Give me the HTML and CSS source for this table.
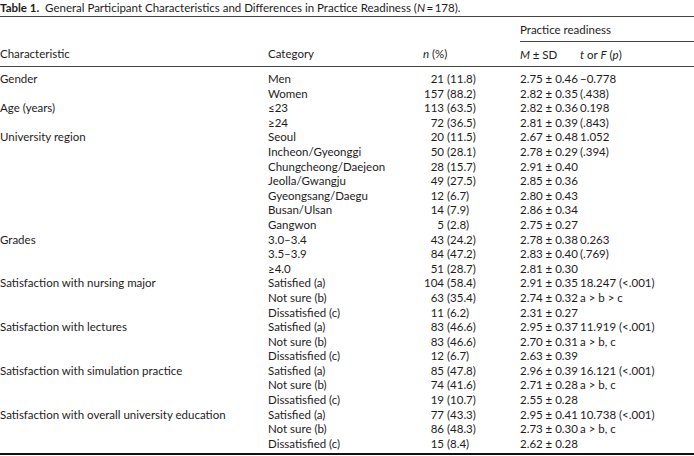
FILE: index.html
```html
<!DOCTYPE html>
<html>
<head>
<meta charset="utf-8">
<link rel="stylesheet" href="styles.css">
</head>
<body>
<div class="caption"><b>Table 1.</b>&nbsp; General Participant Characteristics and Differences in Practice Readiness (<i>N</i>&#8201;=&#8201;178).</div>
<table class="tbl">
  <colgroup>
    <col class="c1"><col class="c2"><col class="c3"><col class="c4"><col class="c5">
  </colgroup>
  <thead>
    <tr class="h1"><th></th><th></th><th></th><th colspan="2" class="span">Practice readiness</th></tr>
    <tr class="h2"><th>Characteristic</th><th>Category</th><th class="nh"><i>n</i> (%)</th><th><i>M</i>&#8197;±&#8197;SD</th><th><i>t</i> or <i>F</i> (<i>p</i>)</th></tr>
  </thead>
  <tbody>
    <tr><td>Gender</td><td>Men</td><td><span class="n">21</span><span class="p">(11.8)</span></td><td>2.75&#8197;±&#8197;0.46</td><td>−0.778</td></tr>
    <tr><td></td><td>Women</td><td><span class="n">157</span><span class="p">(88.2)</span></td><td>2.82&#8197;±&#8197;0.35</td><td>(.438)</td></tr>
    <tr><td>Age (years)</td><td>≤23</td><td><span class="n">113</span><span class="p">(63.5)</span></td><td>2.82&#8197;±&#8197;0.36</td><td>0.198</td></tr>
    <tr><td></td><td>≥24</td><td><span class="n">72</span><span class="p">(36.5)</span></td><td>2.81&#8197;±&#8197;0.39</td><td>(.843)</td></tr>
    <tr><td>University region</td><td>Seoul</td><td><span class="n">20</span><span class="p">(11.5)</span></td><td>2.67&#8197;±&#8197;0.48</td><td>1.052</td></tr>
    <tr><td></td><td>Incheon/Gyeonggi</td><td><span class="n">50</span><span class="p">(28.1)</span></td><td>2.78&#8197;±&#8197;0.29</td><td>(.394)</td></tr>
    <tr><td></td><td>Chungcheong/Daejeon</td><td><span class="n">28</span><span class="p">(15.7)</span></td><td>2.91&#8197;±&#8197;0.40</td><td></td></tr>
    <tr><td></td><td>Jeolla/Gwangju</td><td><span class="n">49</span><span class="p">(27.5)</span></td><td>2.85&#8197;±&#8197;0.36</td><td></td></tr>
    <tr><td></td><td>Gyeongsang/Daegu</td><td><span class="n">12</span><span class="p">(6.7)</span></td><td>2.80&#8197;±&#8197;0.43</td><td></td></tr>
    <tr><td></td><td>Busan/Ulsan</td><td><span class="n">14</span><span class="p">(7.9)</span></td><td>2.86&#8197;±&#8197;0.34</td><td></td></tr>
    <tr><td></td><td>Gangwon</td><td><span class="n">5</span><span class="p">(2.8)</span></td><td>2.75&#8197;±&#8197;0.27</td><td></td></tr>
    <tr><td>Grades</td><td>3.0–3.4</td><td><span class="n">43</span><span class="p">(24.2)</span></td><td>2.78&#8197;±&#8197;0.38</td><td>0.263</td></tr>
    <tr><td></td><td>3.5–3.9</td><td><span class="n">84</span><span class="p">(47.2)</span></td><td>2.83&#8197;±&#8197;0.40</td><td>(.769)</td></tr>
    <tr><td></td><td>≥4.0</td><td><span class="n">51</span><span class="p">(28.7)</span></td><td>2.81&#8197;±&#8197;0.30</td><td></td></tr>
    <tr><td>Satisfaction with nursing major</td><td>Satisfied (a)</td><td><span class="n">104</span><span class="p">(58.4)</span></td><td>2.91&#8197;±&#8197;0.35</td><td>18.247 (&lt;.001)</td></tr>
    <tr><td></td><td>Not sure (b)</td><td><span class="n">63</span><span class="p">(35.4)</span></td><td>2.74&#8197;±&#8197;0.32</td><td>a &gt; b &gt; c</td></tr>
    <tr><td></td><td>Dissatisfied (c)</td><td><span class="n">11</span><span class="p">(6.2)</span></td><td>2.31&#8197;±&#8197;0.27</td><td></td></tr>
    <tr><td>Satisfaction with lectures</td><td>Satisfied (a)</td><td><span class="n">83</span><span class="p">(46.6)</span></td><td>2.95&#8197;±&#8197;0.37</td><td>11.919 (&lt;.001)</td></tr>
    <tr><td></td><td>Not sure (b)</td><td><span class="n">83</span><span class="p">(46.6)</span></td><td>2.70&#8197;±&#8197;0.31</td><td>a &gt; b, c</td></tr>
    <tr><td></td><td>Dissatisfied (c)</td><td><span class="n">12</span><span class="p">(6.7)</span></td><td>2.63&#8197;±&#8197;0.39</td><td></td></tr>
    <tr><td>Satisfaction with simulation practice</td><td>Satisfied (a)</td><td><span class="n">85</span><span class="p">(47.8)</span></td><td>2.96&#8197;±&#8197;0.39</td><td>16.121 (&lt;.001)</td></tr>
    <tr><td></td><td>Not sure (b)</td><td><span class="n">74</span><span class="p">(41.6)</span></td><td>2.71&#8197;±&#8197;0.28</td><td>a &gt; b, c</td></tr>
    <tr><td></td><td>Dissatisfied (c)</td><td><span class="n">19</span><span class="p">(10.7)</span></td><td>2.55&#8197;±&#8197;0.28</td><td></td></tr>
    <tr><td>Satisfaction with overall university education</td><td>Satisfied (a)</td><td><span class="n">77</span><span class="p">(43.3)</span></td><td>2.95&#8197;±&#8197;0.41</td><td>10.738 (&lt;.001)</td></tr>
    <tr><td></td><td>Not sure (b)</td><td><span class="n">86</span><span class="p">(48.3)</span></td><td>2.73&#8197;±&#8197;0.30</td><td>a &gt; b, c</td></tr>
    <tr class="last"><td></td><td>Dissatisfied (c)</td><td><span class="n">15</span><span class="p">(8.4)</span></td><td>2.62&#8197;±&#8197;0.28</td><td></td></tr>
  </tbody>
</table>
</body>
</html>
```
FILE: styles.css
```css
html, body {
  margin: 0;
  padding: 0;
  background: #fff;
}
body {
  width: 694px;
  height: 456px;
  overflow: hidden;
  font-family: Lato, "Open Sans", sans-serif;
  font-size: 11.5px;
  color: #1e1b1c;
}
.caption {
  height: 16px;
  line-height: 16px;
  border-bottom: 1px solid #444;
  white-space: nowrap;
}
.caption b {
  font-weight: 700;
}
.tbl {
  width: 694px;
  border-collapse: collapse;
  table-layout: fixed;
}
.c1 { width: 268px; }
.c2 { width: 152px; }
.c3 { width: 100px; }
.c4 { width: 60px; }
.c5 { width: 114px; }
.tbl th, .tbl td {
  padding: 0;
  text-align: left;
  font-weight: 400;
  white-space: nowrap;
  vertical-align: middle;
}
.h1 th {
  height: 24px;
}
.h1 th.span {
  border-bottom: 1px solid #444;
}
.h2 th {
  height: 24px;
  border-bottom: 1px solid #444;
}
.h2 th.nh {
  padding-left: 3px;
}
.tbl td {
  height: 14.6px;
  line-height: 14.6px;
}
.tbl tbody tr:first-child td {
  padding-top: 5px;
}
.tbl tbody tr.last td {
  padding-bottom: 2px;
  border-bottom: 2px solid #111;
}
.n {
  display: inline-block;
  width: 24px;
  text-align: right;
}
.p {
  margin-left: 3px;
}
```
